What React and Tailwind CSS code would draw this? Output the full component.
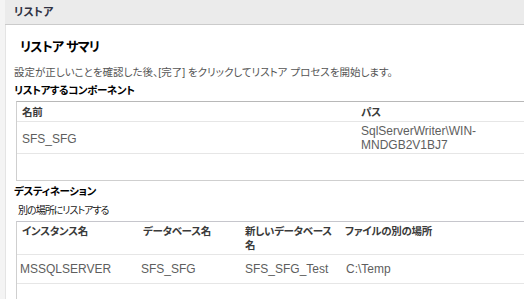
import React from "react";

const font = "font-['Liberation_Sans','Noto_Sans_CJK_JP',sans-serif] [font-feature-settings:'palt']";

const destCols = [
  { head: "インスタンス名", value: "MSSQLSERVER", w: "w-[120px]", hp: "pl-[5px]", dp: "pl-[3px]" },
  { head: "データベース名", value: "SFS_SFG", w: "w-[102px]", hp: "pl-[6px]", dp: "pl-[4px]" },
  { head: ["新しいデータベース", "名"], value: "SFS_SFG_Test", w: "w-[100px]", hp: "pl-[6px]", dp: "pl-[6px]" },
  { head: "ファイルの別の場所", value: "C:\\Temp", w: "flex-1", hp: "pl-[6px]", dp: "pl-[7px]" },
];

function SectionLabel({ children, className = "" }) {
  return (
    <div className={`text-[10.5px] leading-[14px] font-bold tracking-[-0.4px] text-black ${className}`}>
      {children}
    </div>
  );
}

function ComponentTable() {
  return (
    <div className="ml-[2px] mt-[4px] w-[540px] border-l border-b border-t border-[#cfcfcf] border-t-[#b8b8b8]">
      <div className="flex h-[20px] border-b border-[#e6e6e6] text-[10.5px] leading-[14px] font-semibold tracking-[-0.3px] text-[#3a3a3a]">
        <div className="w-[339px] pl-[5px] pt-[3px]">名前</div>
        <div className="flex-1 pl-[5px] pt-[3px]">パス</div>
      </div>
      <div className="flex h-[32px] items-center border-b border-[#e6e6e6] text-[12px] leading-[14px] text-[#5e5e5e]">
        <div className="w-[339px] pl-[5px] pt-[2px]">SFS_SFG</div>
        <div className="flex-1 pl-[5px]">
          <div className="w-[140px]">SqlServerWriter\WIN-MNDGB2V1BJ7</div>
        </div>
      </div>
      <div className="h-[26px]" />
    </div>
  );
}

function DestinationTable() {
  return (
    <div className="ml-[2px] mt-[3px] w-[540px] border-l border-t border-[#cfcfcf] border-t-[#c6c6cc]">
      <div className="flex h-[33px] border-b border-[#e6e6e6] text-[10.5px] leading-[14px] font-semibold tracking-[-0.3px] text-[#3a3a3a]">
        {destCols.map((c) => (
          <div key={c.value} className={`${c.w} ${c.hp} pt-[2px]`}>
            {Array.isArray(c.head) ? (
              <>
                {c.head[0]}
                <br />
                {c.head[1]}
              </>
            ) : (
              c.head
            )}
          </div>
        ))}
      </div>
      <div className="flex h-[29px] items-center border-b border-[#e6e6e6] text-[12px] leading-[14px] text-[#5e5e5e]">
        {destCols.map((c) => (
          <div key={c.value} className={`${c.w} ${c.dp}`}>
            {c.value}
          </div>
        ))}
      </div>
      <div className="h-[30px]" />
    </div>
  );
}

export default function App() {
  return (
    <div className={`w-[524px] h-[299px] overflow-hidden bg-[#f4f4f4] pl-[5px] ${font}`}>
      <div className="flex h-full flex-col">
        <div className="flex h-[25px] shrink-0 items-center border-b border-[#cbcbcb] bg-[#ebebeb] pl-[9px]">
          <span className="text-[11px] font-bold text-[#2f3142]">リストア</span>
        </div>
        <div className="flex-1 border-l border-[#e4e4e4] bg-white pl-[8px]">
          <div className="ml-[6px] mt-[12px] text-[13px] leading-[20px] font-bold tracking-[-0.8px] text-black">
            リストア サマリ
          </div>
          <div className="mt-[8px] whitespace-nowrap text-[10.5px] leading-[14px] text-[#555]">
            設定が正しいことを確認した後、[完了] をクリックしてリストア プロセスを開始します。
          </div>
          <SectionLabel className="mt-[4px]">リストアするコンポーネント</SectionLabel>
          <ComponentTable />
          <SectionLabel className="mt-[3px]">デスティネーション</SectionLabel>
          <div className="ml-[4px] mt-[6px] text-[10px] leading-[14px] tracking-[-1px] text-[#1a1a1a]">
            別の場所にリストアする
          </div>
          <DestinationTable />
        </div>
      </div>
    </div>
  );
}
